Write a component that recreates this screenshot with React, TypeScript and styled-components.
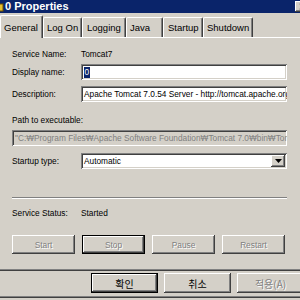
import React from 'react';
import styled, { createGlobalStyle } from 'styled-components';

const GlobalStyle = createGlobalStyle`
  html, body {
    margin: 0;
    padding: 0;
    width: 300px;
    height: 300px;
    overflow: hidden;
    background: #d4d0c8;
  }
  body {
    font-family: "Liberation Sans", Arial, sans-serif;
  }
`;

const raised = `
  box-shadow: inset -1px -1px #404040, inset 1px 1px #ffffff,
    inset -2px -2px #808080, inset 2px 2px #d4d0c8;
`;

const sunken = `
  box-shadow: inset 1px 1px #808080, inset -1px -1px #ffffff,
    inset 2px 2px #404040, inset -2px -2px #d4d0c8;
`;

const Window = styled.div`
  width: 313px;
  background: #d4d0c8;
  display: flex;
  flex-direction: column;
  border-bottom: 1px solid #404040;
  box-shadow: inset 0 -1px #808080;
`;

const TitleBar = styled.div`
  height: 13px;
  background: #0a246a;
  display: flex;
  align-items: center;
`;

const TitleIcon = styled.svg`
  margin-left: -8px;
  flex-shrink: 0;
`;

const TitleText = styled.span`
  margin-left: 1px;
  color: #ffffff;
  font-weight: bold;
  font-size: 11px;
  line-height: 13px;
`;

const CloseButton = styled.div`
  margin-left: auto;
  margin-right: 2px;
  width: 16px;
  height: 11px;
  background: #d4d0c8;
  ${raised}
  display: flex;
  align-items: center;
  justify-content: center;
`;

const TabStrip = styled.div`
  height: 24px;
  display: flex;
  align-items: flex-end;
`;

const Tab = styled.div<{ $active?: boolean; $w: number; $pl: number }>`
  box-sizing: border-box;
  width: ${({ $w }) => $w}px;
  height: ${({ $active }) => ($active ? 23 : 20)}px;
  padding-left: ${({ $pl }) => $pl}px;
  padding-top: ${({ $active }) => ($active ? 6 : 4)}px;
  margin-bottom: ${({ $active }) => ($active ? -1 : 0)}px;
  font-size: 9.5px;
  line-height: 12px;
  color: #000;
  background: #d4d0c8;
  border-top: 1px solid #ffffff;
  border-left: 1px solid #ffffff;
  border-right: 1px solid #404040;
  border-radius: 2px 2px 0 0;
  box-shadow: inset -1px 0 #808080;
  position: relative;
  z-index: ${({ $active }) => ($active ? 1 : 0)};
  white-space: nowrap;
`;

const Panel = styled.div`
  margin-left: -2px;
  margin-right: 8px;
  border-top: 1px solid #ffffff;
  border-bottom: 1px solid #404040;
  box-shadow: inset 0 -1px #808080;
  padding: 8px 0 16px 14px;
  display: flex;
  flex-direction: column;
  font-size: 8.3px;
  color: #000;
`;

const Row = styled.div<{ $top?: number }>`
  height: 16px;
  margin-top: ${({ $top }) => $top ?? 0}px;
  display: flex;
  align-items: center;
`;

const Label = styled.span`
  width: 69px;
  flex-shrink: 0;
  white-space: nowrap;
`;

const Value = styled.span`
  white-space: nowrap;
`;

const Field = styled.div<{ $w: number; $disabled?: boolean }>`
  box-sizing: border-box;
  width: ${({ $w }) => $w}px;
  height: 16px;
  padding: 0 2px 0 3px;
  background: ${({ $disabled }) => ($disabled ? '#d4d0c8' : '#ffffff')};
  color: ${({ $disabled }) => ($disabled ? '#808080' : '#000')};
  ${sunken}
  line-height: 16px;
  white-space: nowrap;
  overflow: hidden;
  display: flex;
  align-items: center;
`;

const Selected = styled.span`
  background: #0a246a;
  color: #ffffff;
  line-height: 11px;
  padding: 0 0.5px;
`;

const DropButton = styled.div`
  margin-left: auto;
  width: 14px;
  height: 12px;
  flex-shrink: 0;
  background: #d4d0c8;
  ${raised}
  display: flex;
  align-items: center;
  justify-content: center;
`;

const Separator = styled.div`
  margin-top: 28px;
  width: 275px;
  border-top: 1px solid #808080;
  border-bottom: 1px solid #ffffff;
`;

const ActionRow = styled.div`
  margin-top: 14px;
  display: flex;
  gap: 7px;
`;

const WinButton = styled.div<{ $w: number; $h: number; $default?: boolean; $disabled?: boolean; $cjk?: boolean }>`
  box-sizing: border-box;
  width: ${({ $w }) => $w}px;
  height: ${({ $h }) => $h}px;
  background: #d4d0c8;
  ${raised}
  ${({ $default }) => ($default ? 'border: 1px solid #000;' : '')}
  display: flex;
  align-items: center;
  justify-content: center;
  font-family: ${({ $cjk }) =>
    $cjk ? '"Noto Sans CJK KR", "Liberation Sans", sans-serif' : '"Liberation Sans", Arial, sans-serif'};
  font-size: ${({ $cjk }) => ($cjk ? 10 : 8.3)}px;
  color: ${({ $disabled }) => ($disabled ? '#808080' : '#000')};
  text-shadow: ${({ $disabled }) => ($disabled ? '1px 1px #ffffff' : 'none')};
`;

const DialogButtons = styled.div`
  display: flex;
  justify-content: flex-end;
  gap: 6px;
  padding: 2px 9px 4px 0;
`;

const tabs = [
  { label: 'General', w: 43, pl: 3, active: true },
  { label: 'Log On', w: 39, pl: 3 },
  { label: 'Logging', w: 44, pl: 4 },
  { label: 'Java', w: 37, pl: 3 },
  { label: 'Startup', w: 40, pl: 4 },
  { label: 'Shutdown', w: 50, pl: 3 },
];

export default function App() {
  return (
    <>
      <GlobalStyle />
      <Window>
        <TitleBar>
          <TitleIcon width="12" height="10" viewBox="0 0 12 10">
            <rect x="1" y="2" width="10" height="7" fill="#e8c030" stroke="#705000" strokeWidth="1" />
            <rect x="3" y="4" width="5" height="3" fill="#f8e890" />
          </TitleIcon>
          <TitleText>0 Properties</TitleText>
          <CloseButton>
            <svg width="8" height="7" viewBox="0 0 8 7">
              <path d="M1 0.5 L7 6.5 M7 0.5 L1 6.5" stroke="#000" strokeWidth="1.4" />
            </svg>
          </CloseButton>
        </TitleBar>

        <TabStrip>
          {tabs.map((t) => (
            <Tab key={t.label} $active={t.active} $w={t.w} $pl={t.pl}>
              {t.label}
            </Tab>
          ))}
        </TabStrip>

        <Panel>
          <Row>
            <Label>Service Name:</Label>
            <Value>Tomcat7</Value>
          </Row>
          <Row $top={2}>
            <Label>Display name:</Label>
            <Field $w={206}>
              <Selected>0</Selected>
            </Field>
          </Row>
          <Row $top={6}>
            <Label>Description:</Label>
            <Field $w={206}>Apache Tomcat 7.0.54 Server - http://tomcat.apache.org/</Field>
          </Row>
          <Row $top={10}>
            <Label>Path to executable:</Label>
          </Row>
          <Row $top={2}>
            <Field $w={275} $disabled>
              "C:₩Program Files₩Apache Software Foundation₩Tomcat 7.0₩bin₩Tomcat7.exe" //RS//Tomcat7
            </Field>
          </Row>
          <Row $top={7}>
            <Label>Startup type:</Label>
            <Field $w={206}>
              Automatic
              <DropButton>
                <svg width="7" height="4" viewBox="0 0 7 4">
                  <path d="M0 0 H7 L3.5 4 Z" fill="#000" />
                </svg>
              </DropButton>
            </Field>
          </Row>
          <Separator />
          <Row $top={6}>
            <Label>Service Status:</Label>
            <Value>Started</Value>
          </Row>
          <ActionRow>
            <WinButton $w={63} $h={19} $disabled>Start</WinButton>
            <WinButton $w={63} $h={19} $disabled $default>Stop</WinButton>
            <WinButton $w={63} $h={19} $disabled>Pause</WinButton>
            <WinButton $w={63} $h={19} $disabled>Restart</WinButton>
          </ActionRow>
        </Panel>

        <DialogButtons>
          <WinButton $w={67} $h={20} $cjk $default>확인</WinButton>
          <WinButton $w={67} $h={20} $cjk>취소</WinButton>
          <WinButton $w={67} $h={20} $cjk $disabled>적용(A)</WinButton>
        </DialogButtons>
      </Window>
    </>
  );
}
